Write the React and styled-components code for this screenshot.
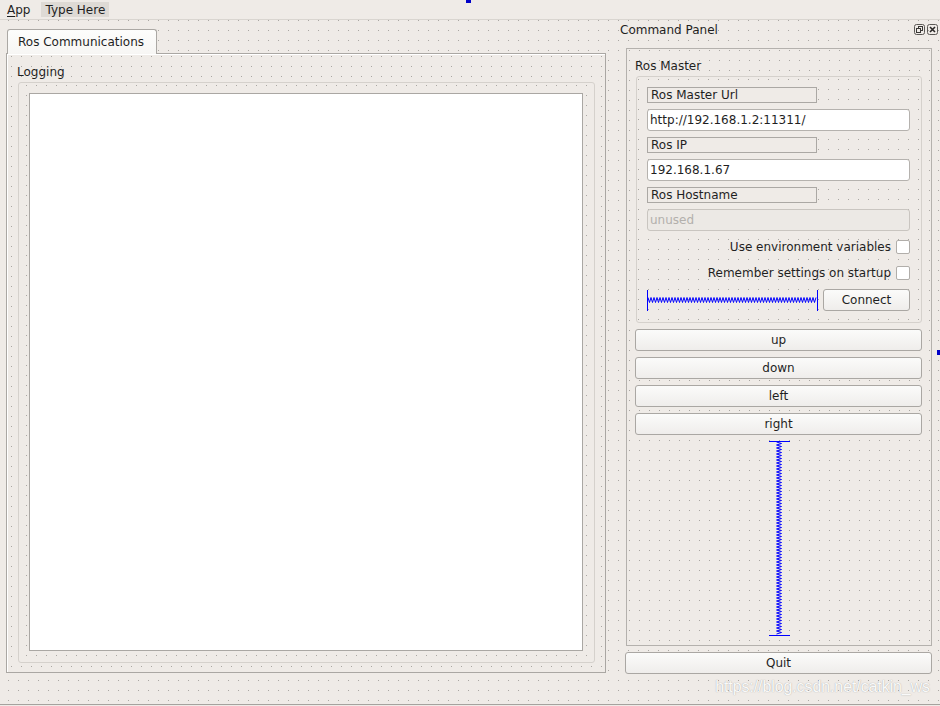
import React from 'react';
import styled, { createGlobalStyle, css } from 'styled-components';

const BG = '#efebe7';
const dotGrid = css`
  background-color: ${BG};
  background-image: conic-gradient(from 270deg at 1px 1px, #aaa7a3 25%, transparent 0);
  background-size: 10px 10px;
`;

const Global = createGlobalStyle`
  html, body { margin: 0; padding: 0; background: ${BG}; }
  * { box-sizing: border-box; }
  body { font-family: "DejaVu Sans", "Noto Sans", sans-serif; font-size: 12px; color: #1f1f1f; }
`;

const Root = styled.div`
  position: relative;
  width: 940px;
  height: 706px;
  overflow: hidden;
  display: flex;
  flex-direction: column;
  ${dotGrid};
  background-position: 8px 0;
`;

const MenuBar = styled.div`
  height: 20px;
  flex: none;
  display: flex;
  align-items: flex-start;
  gap: 7px;
  padding: 2px 0 0 3px;
  background: ${BG};
  border-bottom: 1px solid #d9d5d0;
`;

const MenuItem = styled.div`
  height: 15px;
  line-height: 16px;
  padding: 0 4px;
  background: ${p => (p.$active ? '#dedad5' : 'transparent')};
  color: #1f1f1f;
  u { text-decoration: underline; text-underline-offset: 2px; }
`;

const Main = styled.div`
  height: 685px;
  flex: none;
  display: flex;
  border-bottom: 1px solid #a5a29e;
`;

const Central = styled.div`
  width: 614px;
  flex: none;
  padding: 9px 0 0 6px;
  display: flex;
  flex-direction: column;
`;

const TabWidget = styled.div`
  width: 600px;
  display: flex;
  flex-direction: column;
`;

const TabBar = styled.div`
  height: 24px;
  display: flex;
  padding-left: 1px;
`;

const Tab = styled.div`
  position: relative;
  z-index: 1;
  width: 150px;
  height: 25px;
  padding: 1px 0 0 10px;
  line-height: 23px;
  border: 1px solid #aba8a4;
  border-bottom: none;
  border-radius: 3px 3px 0 0;
  background: linear-gradient(#fdfdfc, #f7f6f4);
`;

const Pane = styled.div`
  height: 620px;
  border: 1px solid #aaa7a3;
  box-shadow: inset 1px 1px 0 #ffffff;
  ${dotGrid};
  background-position: 4px 2px;
  padding: 9px 10px 9px 10px;
  display: flex;
  flex-direction: column;
`;

const GroupTitle = styled.div`
  height: ${p => p.$h || 18}px;
  line-height: ${p => p.$lh || p.$h || 18}px;
  flex: none;
`;

const GroupFrame = styled.div`
  flex: 1;
  margin: 1px 0 0 1px;
  border: 1px solid #d5d1cc;
  border-radius: 3px;
  ${dotGrid};
  background-position: 7px 2px;
  padding: 10px 11px 11px 10px;
  display: flex;
  flex-direction: column;
`;

const TextArea = styled.div`
  flex: 1;
  background: #ffffff;
  border: 1px solid #aaa7a3;
`;

const Dock = styled.div`
  flex: 1;
  display: flex;
  flex-direction: column;
`;

const DockTitle = styled.div`
  height: 28px;
  flex: none;
  display: flex;
  justify-content: space-between;
  align-items: flex-start;
  padding: 1px 2px 0 6px;
  line-height: 18px;
`;

const TitleButtons = styled.div`
  display: flex;
  gap: 2px;
  margin-top: 3px;
`;

const DockContent = styled.div`
  display: flex;
  flex-direction: column;
  padding: 0 8px 0 11px;
`;

const DockFrame = styled.div`
  height: 598px;
  margin-left: 1px;
  border: 1px solid #b4b1ad;
  ${dotGrid};
  background-position: 2px 1px;
  padding: 7px 9px 9px 8px;
  display: flex;
  flex-direction: column;
`;

const InnerGroup = styled.div`
  margin: 1px 0 0 1px;
  border: 1px solid #d5d1cc;
  border-radius: 3px;
  ${dotGrid};
  background-position: 1px 2px;
  padding: 10px 11px 11px 10px;
  display: flex;
  flex-direction: column;
  gap: 6px;
`;

const FieldLabel = styled.div`
  width: 170px;
  height: 16px;
  line-height: 14px;
  padding-left: 3px;
  border: 1px solid #aba8a4;
  background: ${BG};
`;

const Edit = styled.div`
  height: 22px;
  line-height: 20px;
  padding-left: 2px;
  border: 1px solid ${p => (p.$disabled ? '#c9c5c0' : '#b5b2ae')};
  border-radius: 3px;
  background: ${p => (p.$disabled ? '#ece9e5' : '#ffffff')};
  color: ${p => (p.$disabled ? '#b3b0ac' : '#1f1f1f')};
`;

const CheckRow = styled.label`
  height: 20px;
  display: flex;
  justify-content: flex-end;
  align-items: center;
  gap: 5px;
`;

const CheckBox = styled.span`
  width: 14px;
  height: 14px;
  margin-top: -1px;
  border: 1px solid #b1aeaa;
  border-radius: 2px;
  background: #ffffff;
`;

const ConnectRow = styled.div`
  height: 22px;
  display: flex;
  justify-content: space-between;
  align-items: center;
`;

const Button = styled.div`
  height: 22px;
  flex: none;
  width: ${p => (p.$w ? `${p.$w}px` : 'auto')};
  margin-top: ${p => p.$mt ?? 0}px;
  line-height: 20px;
  text-align: center;
  border: 1px solid #aaa7a3;
  border-radius: 3px;
  background: linear-gradient(#fbfbfa, #efedeb);
  color: #1f1f1f;
`;

const VSpacerWrap = styled.div`
  flex: 1;
  margin-top: 6px;
  display: flex;
  justify-content: center;
  padding-left: 1px;
`;

const Watermark = styled.div`
  position: absolute;
  right: 10px;
  top: 678px;
  font-family: "Liberation Sans", Arial, sans-serif;
  font-size: 16px;
  color: rgba(255, 255, 255, 0.95);
  text-shadow: 0 0 1px rgba(80, 80, 80, 0.5);
  letter-spacing: -0.1px;
`;

const Handle = styled.div`
  position: absolute;
  background: #0000c8;
  left: ${p => p.$x}px;
  top: ${p => p.$y}px;
  width: ${p => p.$w}px;
  height: ${p => p.$h}px;
`;

function HSpacer({ width = 171 }) {
  let d = 'M1 8.5';
  let x = 1;
  let up = true;
  while (x + 1.5 < width - 1) {
    x += 1.5;
    d += ` L${x} ${up ? 13.5 : 8.5}`;
    up = !up;
  }
  return (
    <svg width={width} height={22} viewBox={`0 0 ${width} 22`}>
      <line x1="0.5" y1="1" x2="0.5" y2="22" stroke="#0000ff" strokeWidth="1" />
      <line x1={width - 0.5} y1="1" x2={width - 0.5} y2="22" stroke="#0000ff" strokeWidth="1" />
      <path d={d} fill="none" stroke="#0000ff" strokeWidth="1" />
    </svg>
  );
}

function VSpacer({ height = 195 }) {
  let d = 'M8.5 1';
  let y = 1;
  let right = true;
  while (y + 1.5 < height - 1) {
    y += 1.5;
    d += ` L${right ? 13.5 : 8.5} ${y}`;
    right = !right;
  }
  return (
    <svg width={22} height={height} viewBox={`0 0 22 ${height}`}>
      <line x1="1" y1="0.5" x2="22" y2="0.5" stroke="#0000ff" strokeWidth="1" />
      <line x1="1" y1={height - 0.5} x2="22" y2={height - 0.5} stroke="#0000ff" strokeWidth="1" />
      <path d={d} fill="none" stroke="#0000ff" strokeWidth="1" />
    </svg>
  );
}

function FloatIcon() {
  return (
    <svg width="11" height="11" viewBox="0 0 11 11">
      <rect x="0.5" y="0.5" width="10" height="10" rx="2" fill="none" stroke="#5a5855" />
      <rect x="4.5" y="2.5" width="4" height="4" fill="none" stroke="#3a3836" />
      <rect x="2.5" y="4.5" width="4" height="4" fill={BG} stroke="#3a3836" />
    </svg>
  );
}

function CloseIcon() {
  return (
    <svg width="11" height="11" viewBox="0 0 11 11">
      <rect x="0.5" y="0.5" width="10" height="10" rx="2" fill="none" stroke="#5a5855" />
      <path d="M3 3 L8 8 M8 3 L3 8" stroke="#2a2826" strokeWidth="1.6" />
    </svg>
  );
}

export default function App() {
  return (
    <>
      <Global />
      <Root>
        <MenuBar>
          <MenuItem><u>A</u>pp</MenuItem>
          <MenuItem $active>Type Here</MenuItem>
        </MenuBar>
        <Main>
          <Central>
            <TabWidget>
              <TabBar>
                <Tab>Ros Communications</Tab>
              </TabBar>
              <Pane>
                <GroupTitle>Logging</GroupTitle>
                <GroupFrame>
                  <TextArea />
                </GroupFrame>
              </Pane>
            </TabWidget>
          </Central>
          <Dock>
            <DockTitle>
              <span>Command Panel</span>
              <TitleButtons>
                <FloatIcon />
                <CloseIcon />
              </TitleButtons>
            </DockTitle>
            <DockContent>
              <DockFrame>
                <GroupTitle $h={19} $lh={21}>Ros Master</GroupTitle>
                <InnerGroup>
                  <FieldLabel>Ros Master Url</FieldLabel>
                  <Edit>http://192.168.1.2:11311/</Edit>
                  <FieldLabel>Ros IP</FieldLabel>
                  <Edit>192.168.1.67</Edit>
                  <FieldLabel>Ros Hostname</FieldLabel>
                  <Edit $disabled>unused</Edit>
                  <CheckRow>
                    <span>Use environment variables</span>
                    <CheckBox />
                  </CheckRow>
                  <CheckRow>
                    <span>Remember settings on startup</span>
                    <CheckBox />
                  </CheckRow>
                  <ConnectRow>
                    <HSpacer width={171} />
                    <Button $w={87}>Connect</Button>
                  </ConnectRow>
                </InnerGroup>
                <Button $mt={6}>up</Button>
                <Button $mt={6}>down</Button>
                <Button $mt={6}>left</Button>
                <Button $mt={6}>right</Button>
                <VSpacerWrap>
                  <VSpacer height={195} />
                </VSpacerWrap>
              </DockFrame>
              <Button $mt={6}>Quit</Button>
            </DockContent>
          </Dock>
        </Main>
        <Watermark>https://blog.csdn.net/catkin_ws</Watermark>
        <Handle $x={466} $y={0} $w={5} $h={3} />
        <Handle $x={937} $y={350} $w={3} $h={5} />
      </Root>
    </>
  );
}
